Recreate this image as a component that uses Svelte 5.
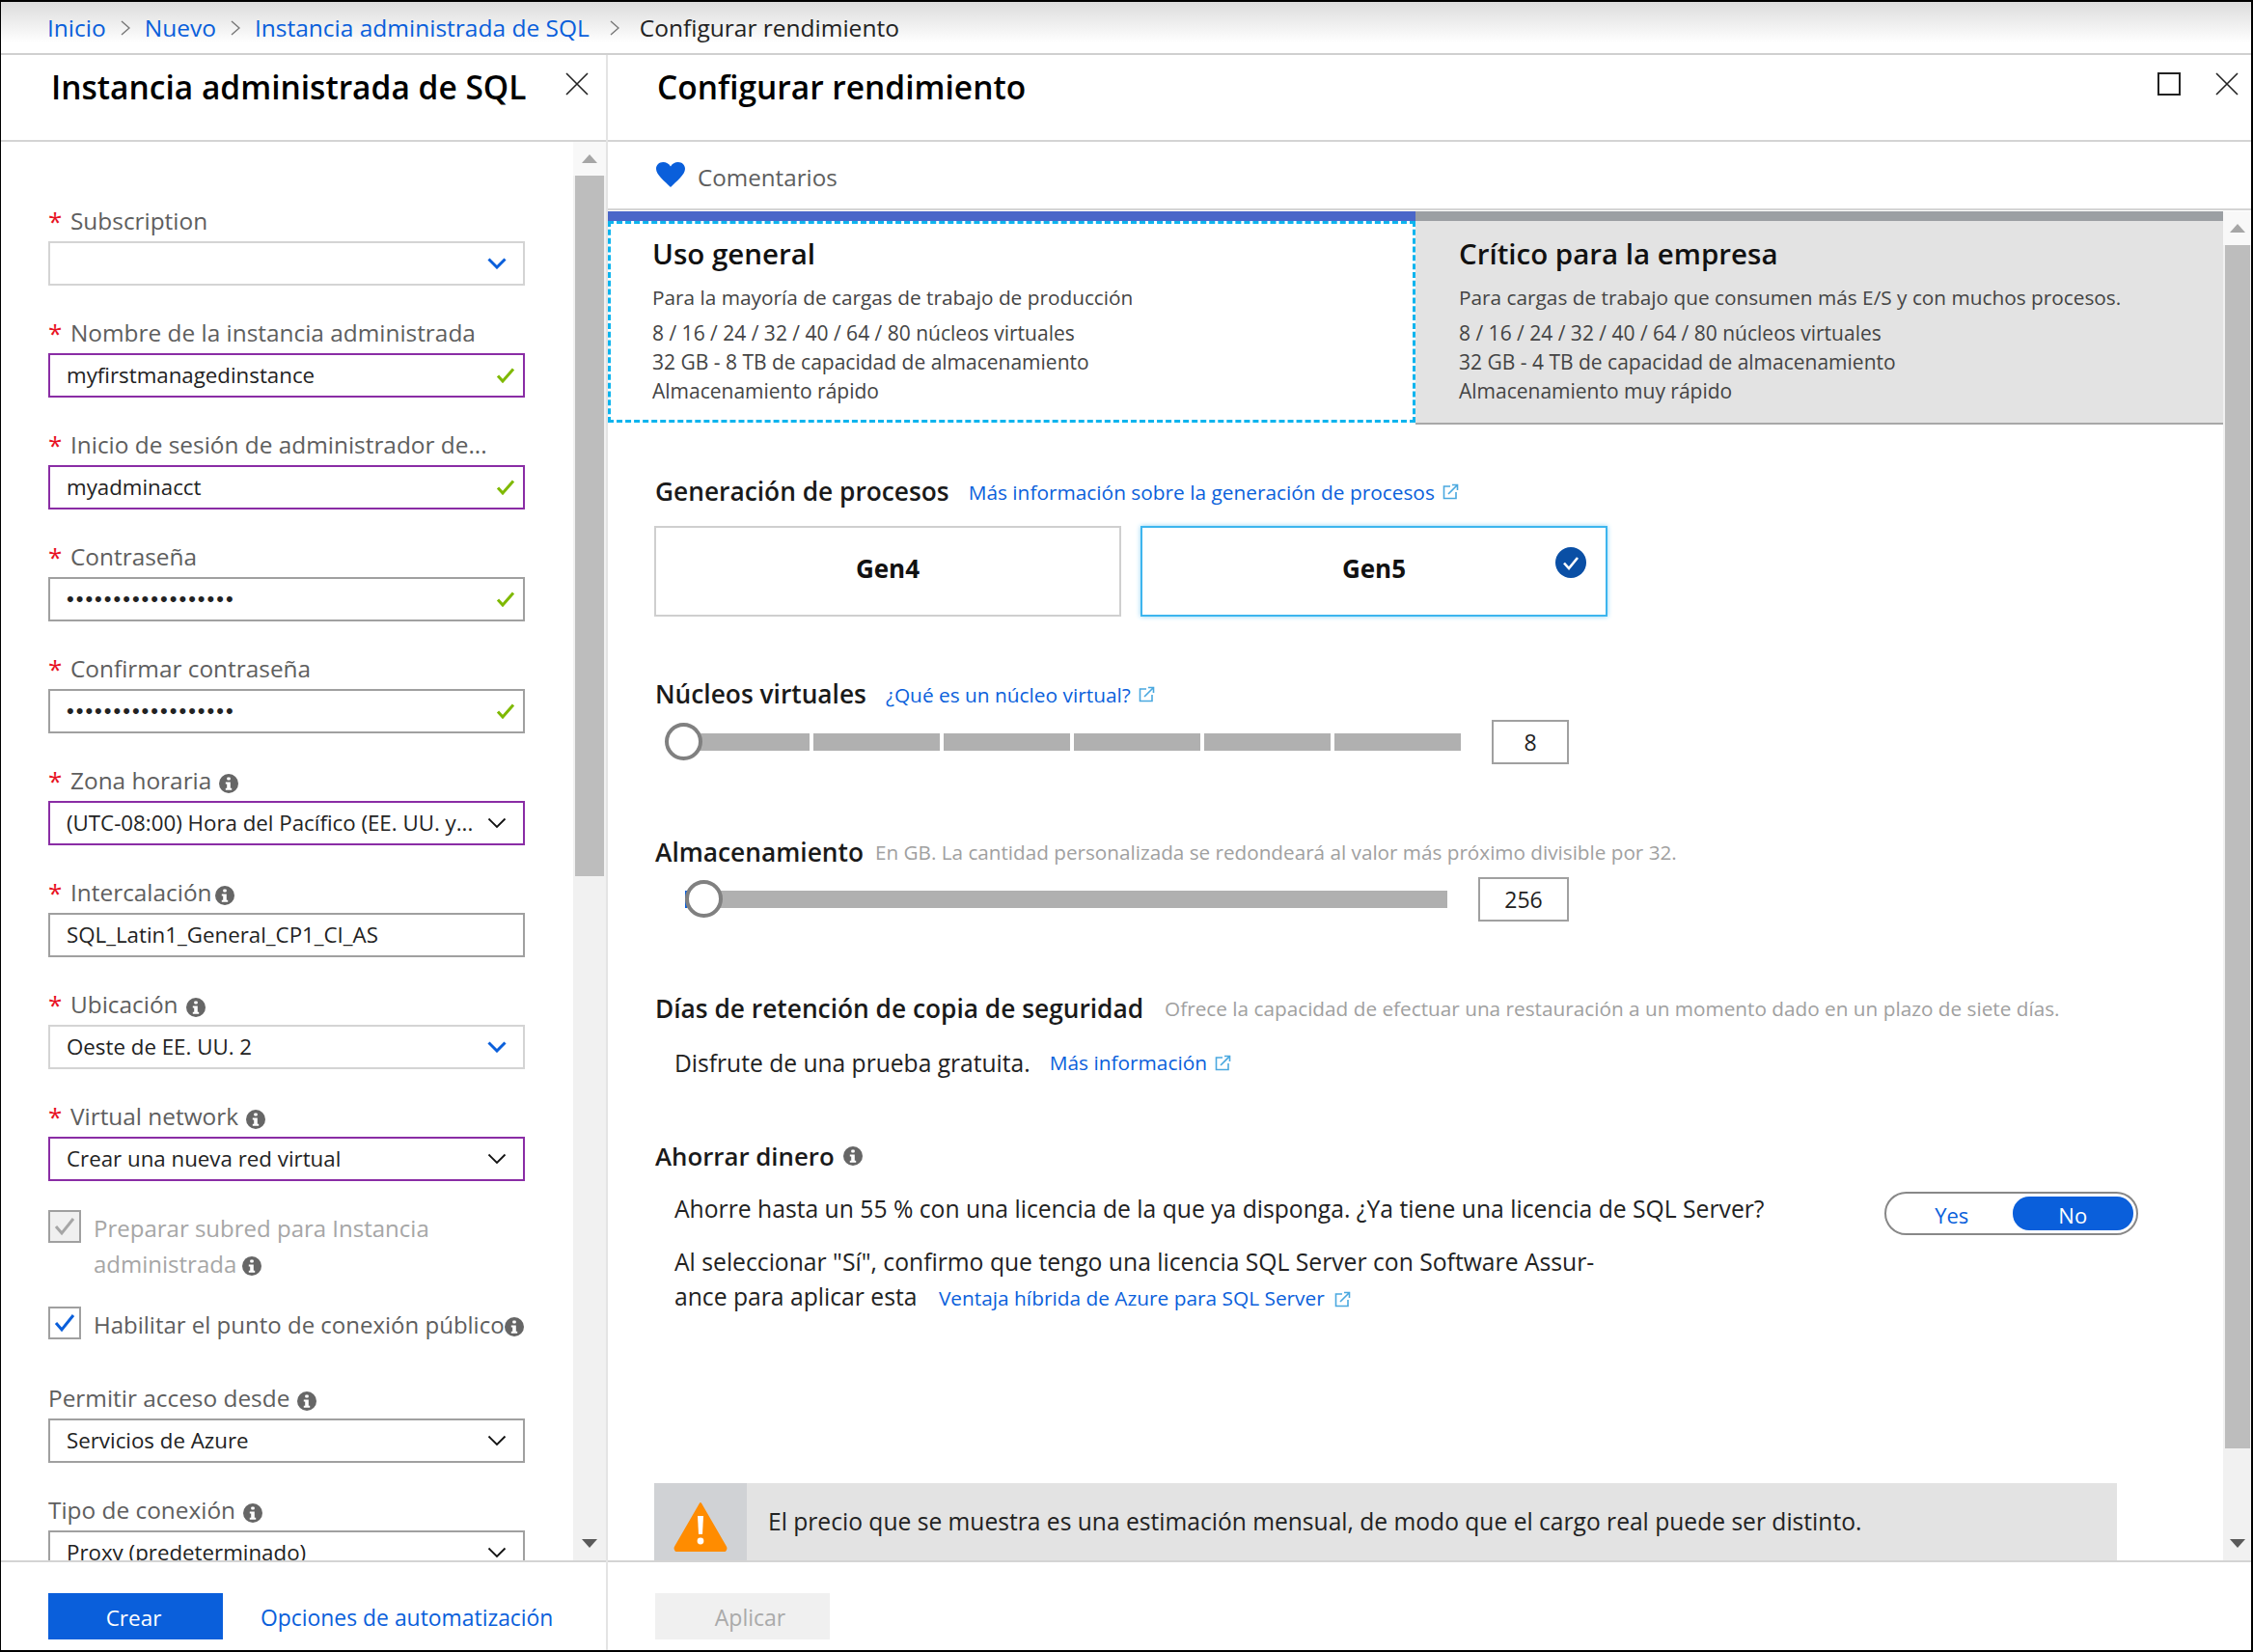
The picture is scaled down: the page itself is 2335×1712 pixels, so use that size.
<script>
  const fields = [
    { label: "Subscription", req: true, value: "", tone: "light", end: "blue" },
    { label: "Nombre de la instancia administrada", req: true, value: "myfirstmanagedinstance", tone: "purple", end: "check" },
    { label: "Inicio de sesión de administrador de...", req: true, value: "myadminacct", tone: "purple", end: "check" },
    { label: "Contraseña", req: true, value: "••••••••••••••••••", dots: true, tone: "gray", end: "check" },
    { label: "Confirmar contraseña", req: true, value: "••••••••••••••••••", dots: true, tone: "gray", end: "check" },
    { label: "Zona horaria", req: true, info: true, value: "(UTC-08:00) Hora del Pacífico (EE. UU. y...", tone: "purple", end: "down" },
    { label: "Intercalación", req: true, info: true, tight: true, value: "SQL_Latin1_General_CP1_CI_AS", tone: "gray" },
    { label: "Ubicación", req: true, info: true, value: "Oeste de EE. UU. 2", tone: "light", end: "blue" },
    { label: "Virtual network", req: true, info: true, value: "Crear una nueva red virtual", tone: "purple", end: "down" }
  ];

  const tabs = [
    {
      title: "Uso general",
      sub: "Para la mayoría de cargas de trabajo de producción",
      lines: ["8 / 16 / 24 / 32 / 40 / 64 / 80 núcleos virtuales", "32 GB - 8 TB de capacidad de almacenamiento", "Almacenamiento rápido"],
      active: true
    },
    {
      title: "Crítico para la empresa",
      sub: "Para cargas de trabajo que consumen más E/S y con muchos procesos.",
      lines: ["8 / 16 / 24 / 32 / 40 / 64 / 80 núcleos virtuales", "32 GB - 4 TB de capacidad de almacenamiento", "Almacenamiento muy rápido"],
      active: false
    }
  ];

  const segments = [1, 2, 3, 4, 5, 6];
</script>

{#snippet info()}
  <svg class="info" viewBox="0 0 20 20" width="20" height="20">
    <circle cx="10" cy="10" r="10" fill="#666" />
    <rect x="8.2" y="3.4" width="3.6" height="3.2" rx="1" fill="#fff" />
    <path d="M6.8 8.4h5v6.4h1.4v2h-6.4v-2h1.4v-4.4h-1.4z" fill="#fff" />
  </svg>
{/snippet}

{#snippet chevron(color, width)}
  <svg class="chev" viewBox="0 0 20 12" width="20" height="12">
    <path d="M1.5 1.5L10 10l8.5-8.5" fill="none" stroke={color} stroke-width={width} />
  </svg>
{/snippet}

{#snippet ext()}
  <svg class="ext" viewBox="0 0 17 17" width="17" height="17">
    <path d="M8 3H1.5v12.5H14V9" fill="none" stroke="#4aa8df" stroke-width="1.6" />
    <path d="M6 11L15 2M10 1.5h5.5V7" fill="none" stroke="#4aa8df" stroke-width="1.6" />
  </svg>
{/snippet}

{#snippet close()}
  <svg viewBox="0 0 24 24" width="24" height="24">
    <path d="M1 1l22 22M23 1L1 23" fill="none" stroke="#222" stroke-width="1.6" />
  </svg>
{/snippet}

{#snippet crumbArrow(last)}
  <svg class="crumb-arrow" class:last viewBox="0 0 10 16" width="10" height="16">
    <path d="M1 1l8 7-8 7" fill="none" stroke="#777" stroke-width="1.4" />
  </svg>
{/snippet}

{#snippet scrollbar(thumb)}
  <div class="scrollbar">
    <div class="arrow-box"><span class="arrow up"></span></div>
    <div class="thumb {thumb}"></div>
    <div class="arrow-end"><span class="arrow down"></span></div>
  </div>
{/snippet}

<div class="screen">
  <nav class="crumbs">
    <a href="#a">Inicio</a>
    {@render crumbArrow(false)}
    <a href="#a">Nuevo</a>
    {@render crumbArrow(false)}
    <a href="#a">Instancia administrada de SQL</a>
    {@render crumbArrow(true)}
    <span>Configurar rendimiento</span>
  </nav>

  <div class="panels">
    <section class="left">
      <header class="head left-head">
        <h1>Instancia administrada de SQL</h1>
        {@render close()}
      </header>

      <div class="scroller">
        <div class="form">
          <div class="form-inner">
            {#each fields as f}
              <div class="field">
                <div class="label" class:tight={f.tight}>
                  {#if f.req}<span class="star">*</span>{/if}
                  <span>{f.label}</span>
                  {#if f.info}{@render info()}{/if}
                </div>
                <div class="input {f.tone}" class:dots={f.dots}>
                  <span class="value">{f.value}</span>
                  {#if f.end === "check"}
                    <svg class="tick" viewBox="0 0 20 16" width="20" height="16">
                      <path d="M2 8.5l5 5.5L18 1.5" fill="none" stroke="#7fb900" stroke-width="3" />
                    </svg>
                  {:else if f.end === "blue"}
                    {@render chevron("#0a5fdb", 3)}
                  {:else if f.end === "down"}
                    {@render chevron("#111", 1.8)}
                  {/if}
                </div>
              </div>
            {/each}

            <div class="check-row disabled">
              <span class="box">
                <svg viewBox="0 0 22 20" width="22" height="20"><path d="M2 10l6 7L20 2" fill="none" stroke="#a6a6a6" stroke-width="3" /></svg>
              </span>
              <p>Preparar subred para Instancia<br />administrada {@render info()}</p>
            </div>

            <div class="check-row enabled">
              <span class="box">
                <svg viewBox="0 0 22 20" width="22" height="20"><path d="M2 10l6 7L20 2" fill="none" stroke="#0a5fdb" stroke-width="3" /></svg>
              </span>
              <p>Habilitar el punto de conexión público{@render info()}</p>
            </div>

            <div class="field">
              <div class="label"><span>Permitir acceso desde</span>{@render info()}</div>
              <div class="input gray">
                <span class="value">Servicios de Azure</span>
                {@render chevron("#111", 1.8)}
              </div>
            </div>

            <div class="field">
              <div class="label"><span>Tipo de conexión</span>{@render info()}</div>
              <div class="input gray">
                <span class="value">Proxy (predeterminado)</span>
                {@render chevron("#111", 1.8)}
              </div>
            </div>
          </div>
        </div>
        {@render scrollbar("thumb-left")}
      </div>

      <footer class="foot">
        <button class="primary">Crear</button>
        <a class="auto" href="#a">Opciones de automatización</a>
      </footer>
    </section>

    <section class="right">
      <header class="head right-head">
        <h1>Configurar rendimiento</h1>
        <div class="win">
          <span class="max"></span>
          {@render close()}
        </div>
      </header>

      <div class="comments">
        <svg viewBox="0 0 30 26" width="30" height="26">
          <path d="M15 26C9 20 0 13 0 7 0 2.800 3.200 0 7.200 0 10.400 0 13.400 1.800 15 4.400 16.600 1.800 19.600 0 22.800 0 26.800 0 30 2.800 30 7 30 13 21 20 15 26z" fill="#0a5fdb" />
        </svg>
        <span>Comentarios</span>
      </div>

      <div class="scroller">
        <div class="content">
          <div class="tabs">
            {#each tabs as t}
              <div class="tab" class:active={t.active}>
                <div class="tab-inner">
                  <h2>{t.title}</h2>
                  <p class="tab-sub">{t.sub}</p>
                  {#each t.lines as line}
                    <p class="tab-line">{line}</p>
                  {/each}
                </div>
              </div>
            {/each}
          </div>

          <div class="sec gen-sec">
            <div class="sec-head">
              <h3>Generación de procesos</h3>
              <a class="more" href="#a">Más información sobre la generación de procesos</a>
              {@render ext()}
            </div>
            <div class="gens">
              <div class="gen"><b>Gen4</b></div>
              <div class="gen on">
                <b>Gen5</b>
                <svg class="gen-check" viewBox="0 0 32 32" width="32" height="32">
                  <circle cx="16" cy="16" r="16" fill="#0a4fa5" />
                  <path d="M9 16.500l5 5.500 9-11" fill="none" stroke="#fff" stroke-width="2.600" />
                </svg>
              </div>
            </div>
          </div>

          <div class="sec cores-sec">
            <div class="sec-head">
              <h3>Núcleos virtuales</h3>
              <a class="more" href="#a">¿Qué es un núcleo virtual?</a>
              {@render ext()}
            </div>
            <div class="slider-row cores">
              <div class="track">
                <span class="knob"></span>
                {#each segments as s}<span class="seg"></span>{/each}
              </div>
              <div class="num">8</div>
            </div>
          </div>

          <div class="sec storage-sec">
            <div class="sec-head">
              <h3>Almacenamiento</h3>
              <span class="hint">En GB. La cantidad personalizada se redondeará al valor más próximo divisible por 32.</span>
            </div>
            <div class="slider-row storage">
              <div class="track">
                <span class="knob"></span>
                <span class="seg"></span>
              </div>
              <div class="num wide">256</div>
            </div>
          </div>

          <div class="sec backup-sec">
            <div class="sec-head">
              <h3>Días de retención de copia de seguridad</h3>
              <span class="hint hint-wide">Ofrece la capacidad de efectuar una restauración a un momento dado en un plazo de siete días.</span>
            </div>
            <div class="trial">
              <span>Disfrute de una prueba gratuita.</span>
              <a class="more" href="#a">Más información</a>
              {@render ext()}
            </div>
          </div>

          <div class="sec save-sec">
            <div class="sec-head">
              <h3 class="plain">Ahorrar dinero</h3>
              {@render info()}
            </div>
            <div class="license">
              <span class="license-text">Ahorre hasta un 55 % con una licencia de la que ya disponga. ¿Ya tiene una licencia de SQL Server?</span>
              <div class="toggle">
                <span class="opt">Yes</span>
                <span class="opt sel">No</span>
              </div>
            </div>
            <p class="hybrid">
              Al seleccionar "Sí", confirmo que tengo una licencia SQL Server con Software Assur-<br />
              ance para aplicar esta
              <a class="more" href="#a">Ventaja híbrida de Azure para SQL Server</a>
              {@render ext()}
            </p>
          </div>

          <div class="warning">
            <div class="warn-icon">
              <svg viewBox="0 0 56 52" width="56" height="52">
                <path d="M28 2L54 47a3 3 0 0 1-2.500 4.500H4.500A3 3 0 0 1 2 47z" fill="#ff8c00" stroke="#ff8c00" stroke-width="2" stroke-linejoin="round" />
                <path d="M25 15h6l-1 19h-4z" fill="#fff" />
                <circle cx="28" cy="41" r="3.400" fill="#fff" />
              </svg>
            </div>
            <span class="warn-text">El precio que se muestra es una estimación mensual, de modo que el cargo real puede ser distinto.</span>
          </div>
        </div>
        {@render scrollbar("thumb-right")}
      </div>

      <footer class="foot">
        <button class="apply">Aplicar</button>
      </footer>
    </section>
  </div>
</div>

<style>
  :global(body) {
    margin: 0;
    background: #fff;
  }

  .screen {
    width: 2335px;
    height: 1712px;
    box-sizing: border-box;
    border: solid #000;
    border-width: 2px 2px 2px 1px;
    display: flex;
    flex-direction: column;
    overflow: hidden;
    font-family: "Open Sans", sans-serif;
    font-size: 24.6px;
    color: #333;
  }

  a {
    color: #0a5fdb;
    text-decoration: none;
  }

  h1, h2, h3, p {
    margin: 0;
    font-weight: 600;
  }

  p {
    font-weight: 400;
  }

  svg {
    display: block;
    flex: none;
  }

  .crumbs {
    height: 55px;
    box-sizing: border-box;
    flex: none;
    display: flex;
    align-items: center;
    padding-left: 48px;
    background: linear-gradient(#dcdcdc, #fff 80%);
    border-bottom: 2px solid #d0d0d0;
    color: #222;
    font-size: 24.5px;
  }

  .crumb-arrow {
    margin: 0 15px;
  }

  .crumb-arrow.last {
    margin: 0 21px;
  }

  .panels {
    flex: 1;
    display: flex;
    min-height: 0;
  }

  .left {
    width: 629px;
    flex: none;
    border-right: 2px solid #e4e4e4;
    display: flex;
    flex-direction: column;
    box-sizing: border-box;
  }

  .right {
    flex: 1;
    display: flex;
    flex-direction: column;
    min-width: 0;
  }

  .head {
    height: 90px;
    flex: none;
    box-sizing: border-box;
    border-bottom: 2px solid #d4d4d4;
    display: flex;
    justify-content: space-between;
    padding-top: 18px;
  }

  .head h1 {
    font-size: 33.500px;
    line-height: 30px;
    color: #000;
  }

  .left-head {
    padding-left: 52px;
    padding-right: 18px;
  }

  .right-head {
    padding-left: 51px;
    padding-right: 13px;
  }

  .win {
    display: flex;
    gap: 36px;
  }

  .max {
    width: 24px;
    height: 24px;
    box-sizing: border-box;
    border: 2px solid #222;
  }

  .scroller {
    flex: 1;
    min-height: 0;
    display: flex;
    overflow: hidden;
  }

  .form {
    width: 593px;
    flex: none;
    overflow: hidden;
  }

  .form-inner {
    padding: 63px 50px 0 49px;
  }

  .field {
    margin-bottom: 30px;
  }

  .label {
    height: 40px;
    box-sizing: border-box;
    padding-bottom: 3px;
    display: flex;
    align-items: center;
    font-size: 24.4px;
    color: #5e5e5e;
    white-space: nowrap;
  }

  .label .info {
    margin-left: 8px;
    margin-top: 6px;
  }

  .label.tight .info {
    margin-left: 3px;
  }

  .star {
    width: 23px;
    color: #e81123;
    font-size: 26px;
    line-height: 26px;
  }

  .input {
    height: 46px;
    box-sizing: border-box;
    border: 2px solid;
    display: flex;
    align-items: center;
    justify-content: space-between;
    padding: 0 17px 1px 17px;
    font-size: 22.3px;
    color: #222;
    white-space: nowrap;
  }

  .input.purple {
    border-color: #8a2da5;
  }

  .input.gray {
    border-color: #a0a0a0;
  }

  .input.light {
    border-color: #d4d4d4;
  }

  .input.dots .value {
    font-family: "Liberation Sans", sans-serif;
    font-size: 22px;
    letter-spacing: 2px;
  }

  .input .tick {
    margin-right: -9px;
  }

  .check-row {
    display: flex;
    gap: 13px;
    color: #5e5e5e;
    font-size: 24px;
  }

  .check-row p {
    line-height: 37px;
    white-space: nowrap;
  }

  .check-row .info {
    display: inline-block;
    vertical-align: -3px;
  }

  .check-row.disabled {
    color: #a6a6a6;
    margin-bottom: 26px;
  }

  .check-row.enabled {
    margin-bottom: 39px;
  }

  .box {
    width: 34px;
    height: 34px;
    box-sizing: border-box;
    border: 2px solid #a0a0a0;
    flex: none;
    display: flex;
    align-items: center;
    justify-content: center;
  }

  .disabled .box {
    background: #f0f0f0;
  }

  .scrollbar {
    flex: none;
    width: 34px;
    display: flex;
    flex-direction: column;
    align-items: center;
    background: #f1f1f1;
  }

  .arrow-box {
    height: 35px;
    width: 100%;
    flex: none;
    background: #f8f8f8;
    display: flex;
    align-items: center;
    justify-content: center;
  }

  .arrow-end {
    margin-top: auto;
    height: 36px;
    display: flex;
    align-items: center;
  }

  .arrow {
    width: 0;
    height: 0;
    border-left: 8px solid transparent;
    border-right: 8px solid transparent;
  }

  .arrow.up {
    border-bottom: 9px solid #a6a6a6;
  }

  .arrow.down {
    border-top: 9px solid #5a5a5a;
  }

  .thumb {
    width: 30px;
    background: #bdbdbd;
  }

  .thumb-left {
    height: 726px;
  }

  .thumb-right {
    height: 1247px;
  }

  .foot {
    height: 93px;
    flex: none;
    box-sizing: border-box;
    border-top: 2px solid #d4d4d4;
    display: flex;
    align-items: flex-start;
    padding: 32px 0 0 49px;
  }

  .primary, .apply {
    width: 181px;
    height: 48px;
    border: 0;
    font-family: inherit;
    font-size: 22.5px;
    padding: 2px 0 0;
  }

  .primary {
    background: #0a5fdb;
    color: #fff;
    padding-right: 4px;
  }

  .apply {
    background: #f0f0f0;
    color: #aaa;
    font-size: 23px;
    padding-left: 16px;
  }

  .auto {
    margin-left: 39px;
    line-height: 52px;
    font-size: 22.9px;
  }

  .comments {
    height: 71px;
    flex: none;
    box-sizing: border-box;
    border-bottom: 2px solid #d4d4d4;
    display: flex;
    align-items: flex-start;
    padding: 21px 0 0 50px;
    gap: 13px;
    color: #5e5e5e;
    font-size: 24.2px;
  }

  .comments span {
    line-height: 32px;
  }

  .right .scroller {
    padding-top: 1px;
  }

  .content {
    width: 1674px;
    flex: none;
    overflow: hidden;
  }

  .right .scrollbar {
    width: 29px;
  }

  .right .thumb {
    width: 26px;
  }

  .tabs {
    display: grid;
    grid-template-columns: 1fr 1fr;
  }

  .tab {
    border-top: 10px solid #9b9fa3;
    background: #e3e3e3;
    height: 209px;
    box-sizing: content-box;
    border-bottom: 2px solid #a8a8a8;
  }

  .tab.active {
    border-top-color: #4a66c8;
    background: #fff;
    border-bottom-color: #fff;
  }

  .tab-inner {
    height: 100%;
    box-sizing: border-box;
    padding: 14px 0 0 45px;
    color: #444;
  }

  .tab.active .tab-inner {
    border: 3px dashed #0db4ee;
    padding: 11px 0 0 43px;
  }

  .tab h2 {
    font-size: 29.5px;
    line-height: 40px;
    color: #111;
  }

  .tab-sub {
    font-size: 20.8px;
    line-height: 30px;
    margin-top: 10px;
  }

  .tab-line {
    font-size: 21px;
    line-height: 30px;
  }

  .tab-sub + .tab-line {
    margin-top: 7px;
  }

  .sec-head {
    height: 36px;
    display: flex;
    align-items: center;
    margin-left: 49px;
    white-space: nowrap;
  }

  h3 {
    font-size: 26.3px;
    color: #1a1a1a;
  }

  h3.plain {
    font-size: 25.8px;
  }

  .save-sec .sec-head .info {
    margin-left: 9px;
  }

  .more {
    font-size: 20.85px;
    margin-left: 20px;
    line-height: 36px;
  }

  .sec-head .more {
    margin-top: 2px;
  }

  .ext {
    margin-left: 8px;
    display: inline-block;
    vertical-align: -1px;
  }

  .hint {
    font-size: 20.7px;
    color: #a0a0a0;
    margin-left: 12px;
  }

  .hint-wide {
    margin-left: 22px;
    font-size: 20.75px;
  }

  .gen-sec {
    margin-top: 51px;
  }

  .gens {
    display: grid;
    grid-template-columns: 484px 484px;
    gap: 20px;
    margin: 18px 0 0 48px;
  }

  .gen {
    height: 94px;
    box-sizing: border-box;
    border: 2px solid #cfcfcf;
    display: flex;
    align-items: center;
    justify-content: center;
    padding-bottom: 6px;
    position: relative;
    color: #111;
    font-size: 26px;
  }

  .gen.on {
    border-color: #3db5ee;
    box-shadow: 0 0 5px #8fd4f5;
  }

  .gen-check {
    position: absolute;
    right: 20px;
    top: 20px;
  }

  .cores-sec {
    margin-top: 62px;
  }

  .storage-sec {
    margin-top: 73px;
  }

  .backup-sec {
    margin-top: 72px;
  }

  .save-sec {
    margin-top: 61px;
  }

  .slider-row {
    display: flex;
    align-items: center;
    margin-top: 9px;
    padding-left: 59px;
    width: 937px;
    box-sizing: content-box;
    height: 46px;
    justify-content: space-between;
  }

  .storage {
    padding-left: 80px;
    width: 916px;
    margin-top: 8px;
  }

  .track {
    position: relative;
    flex: 1;
    display: flex;
    gap: 4px;
    height: 18px;
    padding-left: 19px;
    margin-right: 32px;
  }

  .storage .track {
    padding-left: 0;
    border-left: 2px solid #0a5fdb;
  }

  .seg {
    flex: 1;
    background: #b0b0b0;
  }

  .knob {
    position: absolute;
    left: 0;
    top: -11px;
    width: 39px;
    height: 39px;
    box-sizing: border-box;
    border-radius: 50%;
    border: 4px solid #808080;
    background: #fff;
  }

  .storage .knob {
    left: -2px;
  }

  .num {
    width: 80px;
    height: 46px;
    box-sizing: border-box;
    flex: none;
    border: 2px solid #a0a0a0;
    display: flex;
    align-items: center;
    justify-content: center;
    font-size: 23px;
    color: #222;
  }

  .num.wide {
    width: 94px;
  }

  .trial {
    display: flex;
    align-items: center;
    margin: 20px 0 0 69px;
    height: 36px;
    color: #222;
  }

  .license {
    display: flex;
    justify-content: space-between;
    margin: 19px 0 0 69px;
    width: 1517px;
    color: #222;
    font-size: 24.7px;
  }

  .license-text {
    line-height: 36px;
  }

  .toggle {
    width: 263px;
    height: 45px;
    box-sizing: border-box;
    border: 2px solid #888;
    border-radius: 23px;
    display: flex;
    align-items: center;
    padding: 0 3px 0 5px;
    font-size: 22px;
    color: #0a5fdb;
  }

  .opt {
    flex: 1;
    height: 35px;
    line-height: 38px;
    text-align: center;
    border-radius: 17px;
  }

  .opt.sel {
    background: #0a5fdb;
    color: #fff;
  }

  .hybrid {
    margin: 10px 0 0 69px;
    line-height: 36px;
    color: #222;
    white-space: nowrap;
    font-size: 24.7px;
  }

  .hybrid .ext {
    margin-left: 4px;
    vertical-align: -2px;
  }

  .hybrid .more {
    margin-left: 16px;
  }

  .warning {
    margin: 174px 0 0 48px;
    width: 1516px;
    height: 82px;
    background: #e3e3e3;
    display: flex;
    align-items: center;
    color: #222;
  }

  .warn-text {
    margin-bottom: 3px;
  }

  .warn-icon {
    width: 96px;
    height: 100%;
    background: #d0d2d5;
    display: flex;
    align-items: flex-end;
    justify-content: center;
    padding-bottom: 11px;
    box-sizing: border-box;
    margin-right: 22px;
  }
</style>
